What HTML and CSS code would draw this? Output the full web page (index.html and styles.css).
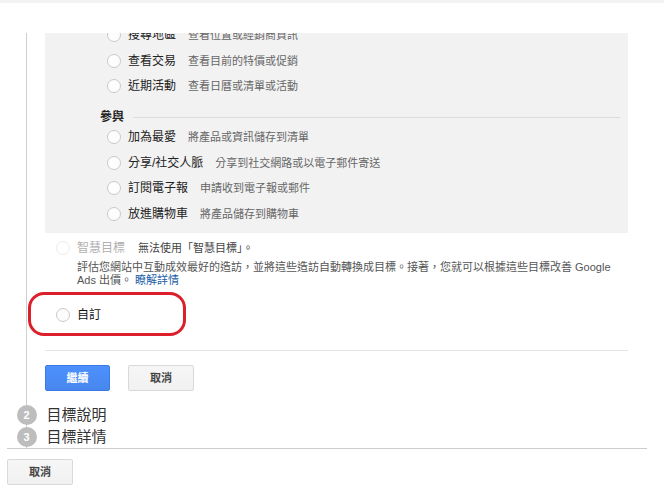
FILE: index.html
```html
<!DOCTYPE html>
<html lang="zh-Hant">
<head>
<meta charset="utf-8">
<title>目標設定</title>
<link rel="stylesheet" href="styles.css">
</head>
<body>
<div class="topbar"></div>
<div class="wizard">
  <div class="step1">
    <div class="panel-clip">
      <div class="panel">
        <div class="opt"><span class="radio"></span><span class="lbl">搜尋地區</span><span class="dsc">查看位置或經銷商資訊</span></div>
        <div class="opt"><span class="radio"></span><span class="lbl">查看交易</span><span class="dsc">查看目前的特價或促銷</span></div>
        <div class="opt"><span class="radio"></span><span class="lbl">近期活動</span><span class="dsc">查看日曆或清單或活動</span></div>
        <div class="group-head"><span class="gh-text">參與</span><span class="gh-line"></span></div>
        <div class="opt"><span class="radio"></span><span class="lbl">加為最愛</span><span class="dsc">將產品或資訊儲存到清單</span></div>
        <div class="opt"><span class="radio"></span><span class="lbl">分享/社交人脈</span><span class="dsc">分享到社交網路或以電子郵件寄送</span></div>
        <div class="opt"><span class="radio"></span><span class="lbl">訂閱電子報</span><span class="dsc">申請收到電子報或郵件</span></div>
        <div class="opt"><span class="radio"></span><span class="lbl">放進購物車</span><span class="dsc">將產品儲存到購物車</span></div>
      </div>
    </div>
    <div class="smart">
      <span class="radio radio-off"></span><span class="lbl-off">智慧目標</span><span class="smart-note">無法使用「智慧目標」。</span>
    </div>
    <p class="smart-desc">評估您網站中互動成效最好的造訪，並將這些造訪自動轉換成目標。接著，您就可以根據這些目標改善 Google Ads 出價。 <a class="link" href="#">瞭解詳情</a></p>
    <div class="custom"><span class="radio"></span><span class="lbl-custom">自訂</span></div>
    <div class="sep"></div>
    <div class="actions">
      <button class="btn btn-primary">繼續</button>
      <button class="btn">取消</button>
    </div>
  </div>
  <div class="step"><span class="num">2</span><span class="step-title">目標說明</span></div>
  <div class="step"><span class="num">3</span><span class="step-title">目標詳情</span></div>
</div>
<div class="footer">
  <button class="btn">取消</button>
</div>
<div class="highlight"></div>
</body>
</html>
```
FILE: styles.css
```css
html, body {
  margin: 0;
  padding: 0;
  background: #fff;
}
body {
  font-family: "Liberation Sans", "Noto Sans CJK TC", sans-serif;
  font-size: 12px;
  color: #222;
  width: 664px;
  height: 492px;
  overflow: hidden;
  position: relative;
}
.topbar {
  height: 3px;
  background: #f3f3f3;
}
.wizard {
  margin-top: 30px;
  margin-left: 26px;
  border-left: 1px solid #cfcfcf;
  width: 602px;
}
.step1 {
  padding-left: 18px;
  padding-bottom: 13px;
}
.panel-clip {
  height: 200px;
  width: 583px;
  overflow: hidden;
  background: #f2f2f2;
}
.panel {
  margin-top: -10.75px;
  padding-left: 62px;
  padding-right: 8px;
}
.opt {
  height: 25.5px;
  display: flex;
  align-items: center;
}
.radio {
  width: 12px;
  height: 12px;
  border: 1px solid #c9c9c9;
  border-radius: 50%;
  background: #fdfdfd;
  flex: none;
}
.lbl {
  margin-left: 7px;
  font-size: 12px;
  line-height: 16px;
  color: #222;
}
.dsc {
  margin-left: 12px;
  font-size: 11px;
  line-height: 16px;
  color: #666;
}
.group-head {
  height: 25.5px;
  box-sizing: border-box;
  padding-top: 10.25px;
  margin-left: -7px;
  display: flex;
  align-items: center;
}
.gh-text {
  font-weight: bold;
  font-size: 12px;
  line-height: 14px;
  color: #222;
}
.gh-line {
  flex: 1;
  height: 1px;
  background: #dcdcdc;
  margin-left: 9px;
  margin-top: 2px;
}
.smart {
  margin-top: 7px;
  height: 16px;
  display: flex;
  align-items: center;
  padding-left: 11px;
}
.radio-off {
  border-color: #ececec;
  background: #fff;
}
.lbl-off {
  margin-left: 7px;
  font-size: 12px;
  line-height: 16px;
  color: #b0b0b0;
}
.smart-note {
  margin-left: 13px;
  font-size: 11px;
  line-height: 16px;
  color: #444;
}
.smart-desc {
  margin: 4.5px 0 0 32px;
  width: 540px;
  font-size: 11px;
  line-height: 13px;
  color: #555;
}
.link {
  color: #1a5ea8;
  text-decoration: none;
}
.custom {
  margin-top: 20.5px;
  height: 16px;
  display: flex;
  align-items: center;
  padding-left: 11px;
}
.lbl-custom {
  margin-left: 7px;
  font-size: 12px;
  line-height: 16px;
  color: #111;
}
.sep {
  margin-top: 27px;
  width: 583px;
  height: 1px;
  background: #e5e5e5;
}
.actions {
  margin-top: 14px;
  display: flex;
  gap: 18px;
}
.btn {
  width: 66px;
  height: 26px;
  box-sizing: border-box;
  border: 1px solid #d9d9d9;
  border-radius: 2px;
  background: linear-gradient(#f6f6f6, #f1f1f1);
  color: #444;
  font-family: "Liberation Sans", "Noto Sans CJK TC", sans-serif;
  font-size: 11px;
  font-weight: bold;
  padding: 0;
  line-height: 24px;
}
.btn-primary {
  width: 65px;
  background: linear-gradient(#4d90fe, #4787ed);
  border-color: #3b7ae8;
  color: #fff;
}
.step {
  height: 22px;
  display: flex;
  align-items: center;
}
.num {
  width: 20px;
  height: 20px;
  margin-left: -10.5px;
  border-radius: 50%;
  background: #bdbdbd;
  color: #fff;
  font-size: 11px;
  font-weight: bold;
  line-height: 20px;
  text-align: center;
  flex: none;
}
.step-title {
  margin-left: 10px;
  font-size: 15px;
  line-height: 20px;
  color: #333;
}
.footer {
  margin-left: 7px;
  width: 640px;
  border-top: 1px solid #cccccc;
  padding-top: 10px;
}
.highlight {
  position: absolute;
  left: 28px;
  top: 292px;
  width: 152px;
  height: 38px;
  border: 3.5px solid #dc1f2b;
  border-radius: 16px;
}
```
